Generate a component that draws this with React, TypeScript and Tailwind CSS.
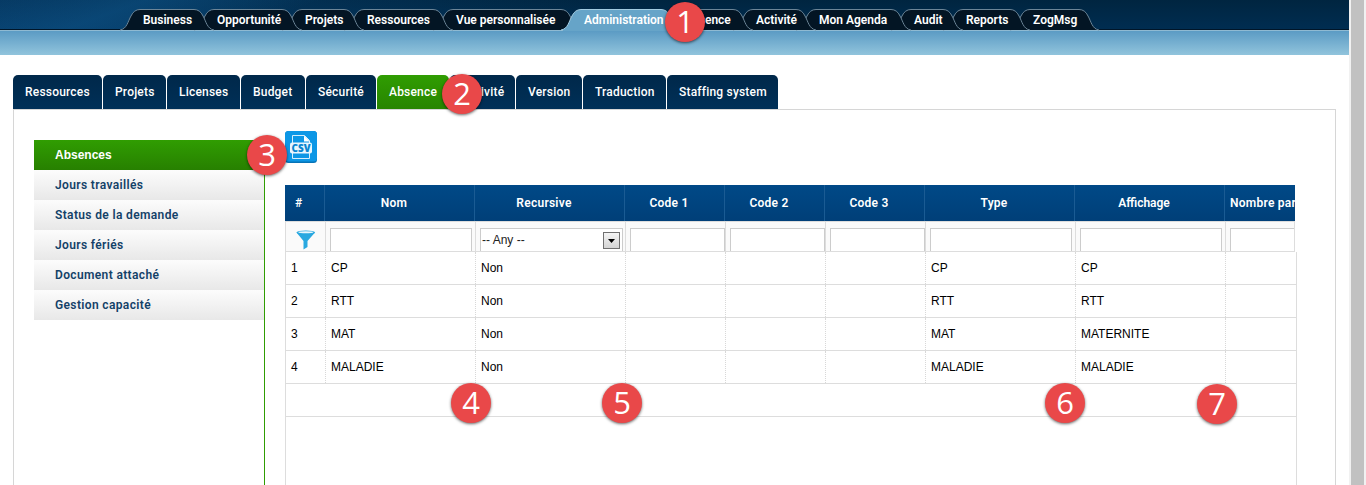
import React from 'react';

const topTabs = [
  { label: 'Business', w: 74 },
  { label: 'Opportunité', w: 88 },
  { label: 'Projets', w: 62 },
  { label: 'Ressources', w: 89 },
  { label: 'Vue personnalisée', w: 128 },
  { label: 'Administration', w: 100, active: true },
  { label: 'Absence', w: 72 },
  { label: 'Activité', w: 63 },
  { label: 'Mon Agenda', w: 95 },
  { label: 'Audit', w: 52 },
  { label: 'Reports', w: 67 },
  { label: 'ZogMsg', w: 69 },
];

const subTabs = [
  { label: 'Ressources', w: 89 },
  { label: 'Projets', w: 63 },
  { label: 'Licenses', w: 73 },
  { label: 'Budget', w: 64 },
  { label: 'Sécurité', w: 70 },
  { label: 'Absence', w: 72, active: true },
  { label: 'Activité', w: 65 },
  { label: 'Version', w: 66 },
  { label: 'Traduction', w: 83 },
  { label: 'Staffing system', w: 111 },
];

const menu = ['Absences', 'Jours travaillés', 'Status de la demande', 'Jours fériés', 'Document attaché', 'Gestion capacité'];

const rows = [
  ['1', 'CP', 'Non', '', '', '', 'CP', 'CP', ''],
  ['2', 'RTT', 'Non', '', '', '', 'RTT', 'RTT', ''],
  ['3', 'MAT', 'Non', '', '', '', 'MAT', 'MATERNITE', ''],
  ['4', 'MALADIE', 'Non', '', '', '', 'MALADIE', 'MALADIE', ''],
];

const heads = ['#', 'Nom', 'Recursive', 'Code 1', 'Code 2', 'Code 3', 'Type', 'Affichage', 'Nombre par'];
const cols = 'grid grid-cols-[40px_150px_150px_100px_100px_100px_150px_150px_minmax(0,1fr)]';

function TopTab({ label, w, active, z }: { label: string; w: number; active?: boolean; z: number }) {
  const d = `M0 21 C7 20 8 12 11 7 Q14 .5 20 .5 H${w} Q${w + 6} .5 ${w + 9} 7 C${w + 12} 12 ${w + 13} 20 ${w + 20} 21`;
  return (
    <div className="relative h-[22px] shrink-0" style={{ width: w, zIndex: active ? 50 : z }}>
      <svg className="absolute -left-[10px] top-0" width={w + 20} height="22" viewBox={`0 0 ${w + 20} 22`}>
        <path d={d} fill={active ? '#66a4c8' : '#031524'} stroke={active ? '#a3cbe0' : '#6c8597'} strokeWidth="1" />
        {active && <path d={`M2 21.5H${w + 18}`} stroke="#66a4c8" />}
      </svg>
      <span className="absolute left-[13px] top-[3px] whitespace-nowrap font-[Roboto,sans-serif] text-[12px] leading-4 font-semibold text-white">{label}</span>
    </div>
  );
}

function Badge({ n, className }: { n: number; className: string }) {
  return (
    <div className={`absolute z-[60] flex size-10 items-center justify-center rounded-full bg-[#e94849] font-['Open_Sans','Noto_Sans',sans-serif] text-[31px] leading-none text-white shadow-[0_1px_3px_rgba(0,0,0,0.6)] ${className}`}>
      <span className="-mt-px">{n}</span>
    </div>
  );
}

function CsvIcon() {
  return (
    <svg width="32" height="32" viewBox="0 0 32 32">
      <rect width="32" height="32" rx="3.5" fill="#0673b7" />
      <rect width="32" height="30.5" rx="3.5" fill="#0c97e6" />
      <path d="M7.500 12V4.500h12l5 5V12M7.500 22v5.500h17V22" fill="none" stroke="#d5eefc" strokeWidth="1" />
      <path d="M19 4.500v6h6z" fill="#fff" />
      <rect x="5" y="11.500" width="22" height="11" rx="2" fill="#e9f6fe" />
      <text x="16" y="20.700" textAnchor="middle" textLength="19" lengthAdjust="spacingAndGlyphs" fontFamily="Open Sans" fontWeight="800" fontSize="10.500" fill="#0785d0">CSV</text>
    </svg>
  );
}

function Funnel() {
  return (
    <svg width="20" height="20" viewBox="0 0 20 20">
      <path d="M.5 2.500 7.500 11v8.500l4-2.500v-6l7.500-8.500z" fill="#29a8e0" />
      <ellipse cx="9.800" cy="2.500" rx="9.300" ry="2" fill="#29a8e0" />
      <ellipse cx="9.800" cy="2.300" rx="7.500" ry="1" fill="#e9f6fc" />
    </svg>
  );
}

function Filter({ i }: { i: number }) {
  if (i === 0) return <div className="pt-[8px] pl-[10px]"><Funnel /></div>;
  if (i === 2)
    return (
      <div className="ml-1 mt-[6px] mr-[2px] flex h-[23px] items-start justify-between border border-b-0 border-[#ccc] bg-white pl-px">
        <span className="pt-[3px] text-[12px] leading-4 text-[#222]">-- Any --</span>
        <span className="mt-[3px] mr-[2px] flex h-[17px] w-[17px] items-center justify-center border border-[#707070] bg-gradient-to-b from-[#f4f4f4] to-[#d4d4d4]">
          <svg className="mt-px" width="7" height="4" viewBox="0 0 7 4"><path d="M0 0h7L3.500 4z" /></svg>
        </span>
      </div>
    );
  const narrow = i >= 3 && i <= 5;
  return <div className={`ml-1 mt-[6px] h-[23px] border border-b-0 border-[#ccc] bg-white ${narrow ? 'mr-0' : i === 8 ? 'mr-0 border-r-0' : 'mr-[3px]'}`} />;
}

export default function App() {
  return (
    <div className="relative flex h-[485px] w-[1366px] overflow-hidden bg-white font-['Liberation_Sans',Arial,sans-serif] text-[12px] text-black">
      <div className="flex w-[1349px] shrink-0 flex-col">
        <header className="h-[55px] shrink-0">
          <div className="flex h-[30px] border-b border-[#001528] bg-[linear-gradient(160deg,transparent_0px,rgba(14,84,136,0.5)_50px,transparent_110px),linear-gradient(to_right,rgba(10,70,120,0.65)_0px,rgba(10,70,120,0.4)_200px,transparent_640px),linear-gradient(to_bottom,#002540,#002d51)] pt-[9px] pl-[130px]">
            {topTabs.map((t, i) => <TopTab key={t.label} {...t} z={20 - i} />)}
          </div>
          <div className="h-[25px] border-t border-[#8fbad2] bg-gradient-to-b from-[#5b9bc4] to-[#91c4dc]" />
        </header>

        <nav className="mt-5 flex h-[35px] shrink-0 gap-px pl-[13px]">
          {subTabs.map((t) => (
            <div
              key={t.label}
              style={{ width: t.w }}
              className={`shrink-0 rounded-t-[5px] bg-gradient-to-b pt-[9px] pl-3 font-[Roboto,sans-serif] text-[12px] leading-4 font-medium tracking-[0.2px] whitespace-nowrap text-white ${t.active ? 'from-[#309d02] to-[#278400]' : 'from-[#00284a] to-[#003058]'}`}
            >
              {t.label}
            </div>
          ))}
        </nav>

        <main className="-mt-px ml-[13px] flex w-[1323px] flex-1 border border-b-0 border-[#d6d6d6]">
          <aside className="mt-[30px] ml-5 w-[231px] shrink-0 border-r border-[#309d02]">
            {menu.map((m, i) => (
              <div
                key={m}
                className={`h-[30px] bg-gradient-to-b pl-[21px] leading-[30px] ${i === 0 ? "from-[#309d02] to-[#278000] font-['Liberation_Sans',Arial,sans-serif] font-bold text-white" : 'from-[#fcfcfc] to-[#e8e8e8] font-[Roboto,sans-serif] font-semibold tracking-[0.36px] text-[#134168]'}`}
              >
                {m}
              </div>
            ))}
          </aside>

          <section className="ml-5 flex w-[1012px] flex-col pt-[21px]">
            <div className="h-[54px] shrink-0"><CsvIcon /></div>
            <div className={`${cols} h-9 w-[1010px] shrink-0 overflow-hidden bg-gradient-to-b from-[#004987] to-[#003f78] font-[Roboto,sans-serif] leading-9 font-semibold text-white`}>
              {heads.map((h, i) => (
                <div key={h} className={`overflow-hidden whitespace-nowrap ${i === 0 ? 'border-r border-[#1a5b93] pl-[10px]' : i === 8 ? 'pl-[5px]' : 'border-r border-[#1a5b93] text-center'} ${i >= 1 && i < 8 ? 'pr-[11px]' : ''} ${i === 7 ? 'tracking-normal' : 'tracking-[0.25px]'}`}>{h}</div>
              ))}
            </div>
            <div className={`${cols} h-[31px] w-[1010px] shrink-0 border border-[#ddd] bg-[#fafafa]`}>
              {heads.map((h, i) => (
                <div key={h} className={i < 8 ? 'border-r border-[#ddd]' : ''}><Filter i={i} /></div>
              ))}
            </div>
            <div className="flex-1 border-x border-[#ddd]">
              {rows.map((r) => (
                <div key={r[0]} className={`${cols} h-[33px] border-b border-[#ddd] leading-[32px]`}>
                  {r.map((c, i) => <div key={i} className={`pl-[5px] ${i < 8 ? 'border-r border-dotted border-[#d8d8d8]' : ''}`}>{c}</div>)}
                </div>
              ))}
              <div className="h-[33px] border-b border-[#ddd]" />
            </div>
          </section>
        </main>
      </div>
      <div className="w-[17px] border-x-2 border-[#f1f1f1] bg-[#c1c1c1]" />

      <Badge n={1} className="left-[665px] top-[2px]" />
      <Badge n={2} className="left-[442px] top-[74px]" />
      <Badge n={3} className="left-[247px] top-[135px]" />
      <Badge n={4} className="left-[451px] top-[383px]" />
      <Badge n={5} className="left-[602px] top-[383px]" />
      <Badge n={6} className="left-[1045px] top-[383px]" />
      <Badge n={7} className="left-[1197px] top-[384px]" />
    </div>
  );
}
